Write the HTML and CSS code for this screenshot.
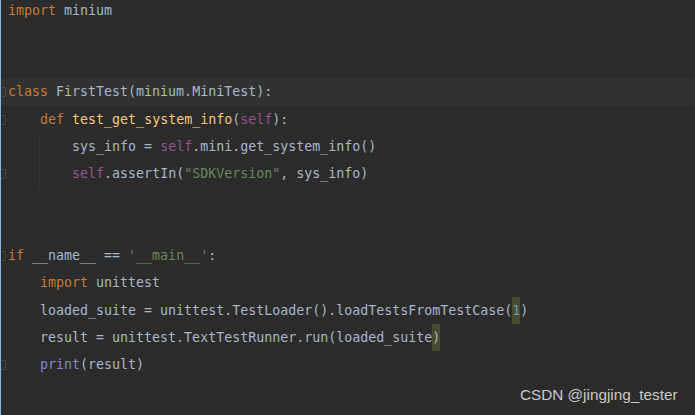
FILE: index.html
```html
<!DOCTYPE html>
<html>
<head>
<meta charset="utf-8">
<link rel="stylesheet" href="styles.css">
</head>
<body>
<div class="editor">
  <div class="code">
    <div class="line"><span class="gut"></span><span class="kw">import</span> minium</div>
    <div class="line"><span class="gut"></span></div>
    <div class="line"><span class="gut"></span></div>
    <div class="line current"><span class="gut"><i class="fold"></i></span><span class="kw">class</span> FirstTest(minium.MiniTest):</div>
    <div class="line"><span class="gut"><i class="fold"></i></span>    <span class="kw">def</span> <span class="fn">test_get_system_info</span>(<span class="self">self</span>):</div>
    <div class="line"><span class="gut"></span><span class="guide">    </span>    sys_info = <span class="self">self</span>.mini.get_system_info()</div>
    <div class="line"><span class="gut"><i class="fold"></i></span><span class="guide">    </span>    <span class="self">self</span>.assertIn(<span class="str">"SDKVersion"</span>, sys_info)</div>
    <div class="line"><span class="gut"></span></div>
    <div class="line"><span class="gut"></span></div>
    <div class="line"><span class="gut"><i class="fold"></i></span><span class="kw">if</span> __name__ == <span class="str">'__main__'</span>:</div>
    <div class="line"><span class="gut"></span>    <span class="kw">import</span> unittest</div>
    <div class="line"><span class="gut"></span>    loaded_suite = unittest.TestLoader().loadTestsFromTestCase(<span class="match num">1</span>)</div>
    <div class="line"><span class="gut"></span>    result = unittest.TextTestRunner.run(loaded_suite<span class="match">)</span></div>
    <div class="line"><span class="gut"><i class="fold"></i></span>    <span class="builtin">print</span>(result)</div>
    <div class="line"><span class="gut"></span></div>
  </div>
  <div class="watermark">CSDN @jingjing_tester</div>
</div>
</body>
</html>
```
FILE: styles.css
```css
html, body {
  margin: 0;
  padding: 0;
  background: #2b2b2b;
  height: 100%;
  overflow: hidden;
}
.editor {
  position: relative;
  height: 415px;
  border-left: 1px solid #8fb6dd;
  background: #2b2b2b;
  overflow: hidden;
}
.code {
  margin-top: -3.5px;
  font-family: "DejaVu Sans Mono", "Liberation Mono", monospace;
  font-size: 13.3px;
  color: #a9b7c6;
}
.line {
  height: 27.3px;
  line-height: 27.3px;
  white-space: pre;
}
.line.current {
  background: #323232;
}
.gut {
  display: inline-block;
  width: 7px;
  height: 27.3px;
  vertical-align: top;
  position: relative;
}
.fold {
  position: absolute;
  left: 0;
  top: 9px;
  width: 4px;
  height: 8px;
  border: 1px solid #474747;
  border-left: none;
  border-radius: 0 2px 2px 0;
}
.guide {
  display: inline-block;
  height: 27.3px;
  vertical-align: top;
  box-shadow: inset -1px 0 0 #353535;
}
.kw { color: #cc7832; }
.fn { color: #ffc66d; }
.self { color: #94558d; }
.str { color: #6a8759; }
.num { color: #6897bb; }
.builtin { color: #8888c6; }
.match {
  background: #4a4a2e;
  display: inline-block;
  height: 27.3px;
  vertical-align: top;
}
.watermark {
  position: absolute;
  left: 519px;
  top: 386px;
  font-family: "Liberation Sans", Arial, sans-serif;
  font-size: 15.3px;
  color: #c9c9c9;
}
```
